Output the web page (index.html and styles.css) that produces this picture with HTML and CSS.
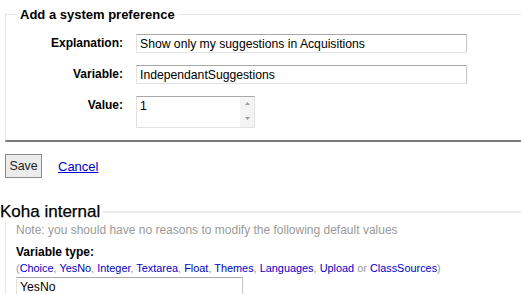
FILE: index.html
```html
<!DOCTYPE html>
<html>
<head>
<meta charset="utf-8">
<link rel="stylesheet" href="styles.css">
</head>
<body>
<form class="page">
  <fieldset class="rows">
    <legend class="rows-legend">Add a system preference</legend>
    <ol class="fields">
      <li class="row">
        <label class="lbl">Explanation:</label>
        <input class="txt" type="text" value="Show only my suggestions in Acquisitions">
      </li>
      <li class="row">
        <label class="lbl">Variable:</label>
        <input class="txt" type="text" value="IndependantSuggestions">
      </li>
      <li class="row">
        <label class="lbl">Value:</label>
        <div class="area">
          <span class="area-text">1</span>
          <span class="scroll">
            <svg width="7" height="5" viewBox="0 0 7 5"><path d="M3.5 1 L6 4 H1 Z" fill="#9a9a9a"/></svg>
            <svg width="7" height="5" viewBox="0 0 7 5"><path d="M1 1 H6 L3.5 4 Z" fill="#9a9a9a"/></svg>
          </span>
        </div>
      </li>
    </ol>
  </fieldset>
  <div class="actions">
    <button class="btn" type="button">Save</button>
    <a class="cancel" href="#">Cancel</a>
  </div>
  <fieldset class="internal">
    <legend class="int-legend">Koha internal</legend>
    <p class="note">Note: you should have no reasons to modify the following default values</p>
    <p class="vt-label">Variable type:</p>
    <p class="types">(<a href="#">Choice</a>, <a href="#">YesNo</a>, <a href="#">Integer</a>, <a href="#">Textarea</a>, <a href="#">Float</a>, <a href="#">Themes</a>, <a href="#">Languages</a>, <a href="#">Upload</a> or <a href="#">ClassSources</a>)</p>
    <input class="txt type-input" type="text" value="YesNo">
  </fieldset>
</form>
</body>
</html>
```
FILE: styles.css
```css
html, body {
  margin: 0;
  padding: 0;
  background: #fff;
  overflow: hidden;
}
body {
  font-family: "Liberation Sans", Arial, sans-serif;
  font-size: 12px;
  color: #000;
}
.page {
  margin: 0;
}
.rows {
  margin: 7px 0 0 5px;
  padding: 0 0 12px 11px;
  border: 0;
  border-left: 1px solid #e6e6e6;
  border-top: 1px solid #e6e6e6;
  border-bottom: 2px solid #7a7a7a;
  min-width: 0;
}
.rows-legend {
  font-size: 13px;
  font-weight: bold;
  line-height: 15px;
  padding: 0 3px;
  margin-top: 0;
}
.fields {
  list-style: none;
  margin: 0;
  padding: 12px 0 0 0;
  display: flex;
  flex-direction: column;
  gap: 12px;
}
.row {
  display: flex;
  align-items: flex-start;
}
.lbl {
  width: 106px;
  text-align: right;
  font-weight: bold;
  font-size: 12px;
  line-height: 15px;
  padding-top: 2px;
  margin-right: 13px;
}
.txt {
  box-sizing: border-box;
  width: 331px;
  height: 19px;
  margin: 0;
  padding: 0 3px;
  border: 1px solid #e2e2e2;
  border-top-color: #a8a8a8;
  border-right-color: #c8c8c8;
  font-family: "Liberation Sans", Arial, sans-serif;
  font-size: 12.2px;
  color: #000;
  background: #fff;
}
.area {
  box-sizing: border-box;
  width: 119px;
  height: 32px;
  border: 1px solid #e2e2e2;
  border-top-color: #a8a8a8;
  display: flex;
  justify-content: space-between;
}
.area-text {
  padding: 2px 0 0 3px;
  font-size: 12.2px;
  line-height: 15px;
}
.scroll {
  width: 14px;
  background: #f4f4f4;
  display: flex;
  flex-direction: column;
  justify-content: space-between;
  align-items: center;
  padding: 4px 0 6px;
}
.scroll svg {
  display: block;
}
.actions {
  display: flex;
  align-items: center;
  gap: 16px;
  margin: 12px 0 0 5px;
}
.btn {
  box-sizing: border-box;
  width: 37px;
  height: 24px;
  margin: 0;
  padding: 0;
  border: 1px solid #8a8a8a;
  background: #ececec;
  font-family: "Liberation Sans", Arial, sans-serif;
  font-size: 12.4px;
  color: #222;
}
.cancel {
  color: #0000cc;
  font-size: 13px;
  text-decoration: underline;
}
.internal {
  margin: 24px 0 0 5px;
  padding: 0 0 0 10px;
  border: 0;
  border-left: 1px solid #e6e6e6;
  border-top: 2px solid #ececec;
  min-width: 0;
}
.int-legend {
  font-size: 17px;
  line-height: 20px;
  padding: 0 3px 0 0;
  margin-left: -16px;
  -webkit-text-stroke: 0.25px #000;
}
.note {
  margin: 1px 0 0;
  color: #9a9a9a;
  font-size: 12px;
  line-height: 15px;
}
.vt-label {
  margin: 7px 0 0;
  font-weight: bold;
  font-size: 12px;
  line-height: 15px;
}
.types {
  margin: 1px 0 0;
  color: #999;
  font-size: 10.9px;
  line-height: 15px;
}
.types a {
  color: #0000cc;
  text-decoration: none;
}
.type-input {
  width: 227px;
  margin-top: 1px;
  display: block;
}
```
